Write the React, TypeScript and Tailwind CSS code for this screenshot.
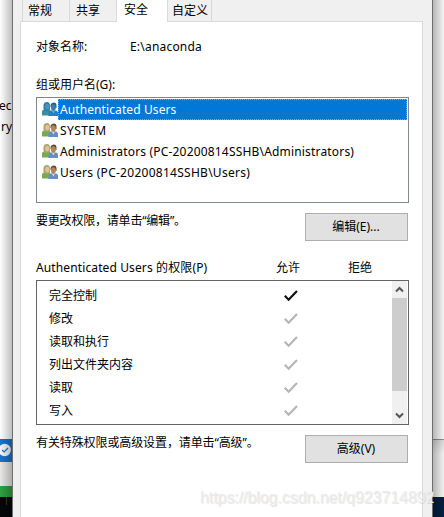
import clsx from "clsx"

const users = [
  { name: "Authenticated Users", selected: true, spacing: "tracking-[0.1px]" },
  { name: "SYSTEM", selected: false, spacing: "tracking-[0.4px]" },
  { name: "Administrators (PC-20200814SSHB\\Administrators)", selected: false, spacing: "tracking-[0.18px]" },
  { name: "Users (PC-20200814SSHB\\Users)", selected: false, spacing: "tracking-[0.27px]" },
]

const permissions = ["完全控制", "修改", "读取和执行", "列出文件夹内容", "读取", "写入"]

function UsersIcon({ blue }: { blue: boolean }) {
  return (
    <svg width="16" height="16" viewBox="0 0 16 16" className="mt-0.5 shrink-0">
      <path d="M0 14.5V10.5Q0 8.5 2.5 8.5H6Q9 8.5 9 11V14.5Z" fill={blue ? "#398f9f" : "#79aa52"} />
      <path d="M1.5 8V4Q2 1 5 1Q8 1 8 4.5V8.5L6 10H3Z" fill={blue ? "#2d7faf" : "#a9a46c"} />
      <ellipse cx="5.3" cy="5.6" rx="2.1" ry="2.8" fill={blue ? "#4696bd" : "#dfc297"} />
      <path d="M6.5 15V11.5Q7 9.5 9 9.5H13.5Q16 9.5 16 12V15Z" fill={blue ? "#237fc7" : "#668fc0"} />
      <path d="M8.5 6V4Q9 1.5 11.7 1.5Q14.5 1.5 14.5 4.5V7Z" fill={blue ? "#215f91" : "#594a3c"} />
      <ellipse cx="11.4" cy="6.6" rx="2.4" ry="3.3" fill={blue ? "#367fac" : "#b5855d"} />
      <path d="M10 10L11.5 12.5L12.5 10Z" fill={blue ? "#75b5df" : "#dce5ec"} />
    </svg>
  )
}

function Check({ dark }: { dark: boolean }) {
  return (
    <svg width="14" height="12" viewBox="0 0 14 12" fill="none">
      <path d="M0.8 5.8L4.6 9.7L13 0.9" stroke={dark ? "#111" : "#b5b5b5"} strokeWidth="2.2" />
    </svg>
  )
}

function Chevron({ down }: { down?: boolean }) {
  return (
    <div className="flex h-[17px] items-center justify-center bg-[#f0f0f0]">
      <svg width="9" height="7" viewBox="0 0 9 7" fill="none" className={clsx(down && "rotate-180")}>
        <path d="M1 5.5L4.5 2L8 5.5" stroke="#555" strokeWidth="2" />
      </svg>
    </div>
  )
}

function Button({ label }: { label: string }) {
  return (
    <button className="h-7 w-[103px] border border-[#adadad] bg-[#e1e1e1] pr-px leading-[26px]">{label}</button>
  )
}

function LeftDesktop() {
  return (
    <div className="relative flex w-3 shrink-0 flex-col overflow-hidden bg-white">
      <div className="h-[439px] pt-[95px] text-[12px] leading-[21px]">
        <div className="-ml-px">ec</div>
        <div className="ml-px">ry</div>
      </div>
      <div className="flex h-[23px] items-center bg-[#1874cd]">
        <svg width="12" height="14" viewBox="0 0 12 14" className="-mt-0.5">
          <circle cx="4.7" cy="7" r="6.2" fill="#f4f8fc" />
          <path d="M2 7L4.2 9L8 5" stroke="#1874cd" strokeWidth="1.2" fill="none" />
        </svg>
      </div>
      <div className="h-6 bg-[#e9e7e6]" />
      <div className="h-[11px] bg-[#2ea043]" />
      <div className="h-5 bg-[#050608]">
        <div className="ml-1.5 h-2 w-px bg-[#4a3012]" />
      </div>
      <div className="absolute inset-0 bg-linear-to-r from-black/0 to-black/25" />
    </div>
  )
}

function RightDesktop() {
  return (
    <div className="relative flex w-[11px] shrink-0 flex-col bg-[#f4f4f4]">
      <div className="h-[440px] border-b border-[#8c8c8c]" />
      <div className="h-[57px] bg-linear-to-b from-[#d8d8d8] to-[#f2f2f2] to-25%" />
      <div className="h-5 bg-[#04203f]" />
      <div className="absolute inset-0 bg-linear-to-r from-black/25 to-black/0" />
    </div>
  )
}

export default function App() {
  return (
    <div className="relative flex h-[517px] w-[444px] overflow-hidden font-['Noto_Sans','Noto_Sans_CJK_SC',sans-serif] text-[12px] leading-4 text-black">
      <LeftDesktop />

      <div className="flex w-[421px] shrink-0 flex-col border-x border-[#6f6f6f] bg-[#f0f0f0] pr-[9px] pl-[7px]">
        <div className="flex h-[21px] shrink-0 pl-0.5 leading-[21px]">
          <div className="w-[47px] border-l border-[#d9d9d9] pl-[5px]">常规</div>
          <div className="w-[47px] border-l border-[#d9d9d9] pl-[6px]">共享</div>
          <div className="z-10 h-[22px] w-[51px] border-l border-[#d9d9d9] bg-white pl-[7px] leading-[19px]">安全</div>
          <div className="w-[45px] border-x border-[#d9d9d9] pl-1 whitespace-nowrap">自定义</div>
        </div>

        <div className="flex flex-1 flex-col border border-b-0 border-[#d9d9d9] bg-white pr-[13px] pl-[15px]">
          <div className="mt-[17px] flex">
            <span className="w-[94px]">对象名称:</span>
            <span className="tracking-[0.2px]">E:\anaconda</span>
          </div>
          <div className="mt-[22px]">组或用户名(G):</div>

          <div className="mt-[4px] h-[106px] w-[373px] border border-[#828790] p-px">
            {users.map((user) => (
              <div key={user.name} className="flex h-[21px] pl-1">
                <UsersIcon blue={user.selected} />
                <div
                  className={clsx(
                    "flex-1 border pl-px leading-[19px] whitespace-nowrap",
                    user.spacing,
                    user.selected ? "border-dotted border-[#ff8728] bg-[#0078d7] text-white" : "border-transparent"
                  )}
                >
                  {user.name}
                </div>
              </div>
            ))}
          </div>

          <div className="mt-[10px] flex h-7 justify-between pr-px">
            <span className="tracking-[-0.2px]">要更改权限，请单击“编辑”。</span>
            <Button label="编辑(E)..." />
          </div>

          <div className="mt-[19px] flex">
            <span className="w-[240px] tracking-[0.12px]">Authenticated Users 的权限(P)</span>
            <span className="w-[72px]">允许</span>
            <span>拒绝</span>
          </div>

          <div className="mt-1 flex h-[145px] w-[373px] border border-[#646464]">
            <div className="flex-1 overflow-hidden pt-[3px] pl-3">
              {permissions.map((name, i) => (
                <div key={name} className="flex h-[23px] items-center">
                  <span className="w-[235px]">{name}</span>
                  <Check dark={i === 0} />
                </div>
              ))}
            </div>
            <div className="mr-px flex w-[15px] flex-col bg-[#f0f0f0]">
              <Chevron />
              <div className="h-[93px] bg-[#cdcdcd]" />
              <div className="flex-1" />
              <Chevron down />
            </div>
          </div>

          <div className="mt-[10px] flex h-7 justify-between pr-px">
            <span className="tracking-[-0.1px]">有关特殊权限或高级设置，请单击“高级”。</span>
            <Button label="高级(V)" />
          </div>
        </div>
      </div>

      <RightDesktop />

      <div className="absolute top-[488px] left-[200px] font-['Liberation_Sans',sans-serif] text-[16px] leading-5 tracking-[-0.07px] whitespace-nowrap text-[#ececec] [text-shadow:1px_1px_1px_#0000001c]">
        https://blog.csdn.net/q923714892
      </div>
    </div>
  )
}
